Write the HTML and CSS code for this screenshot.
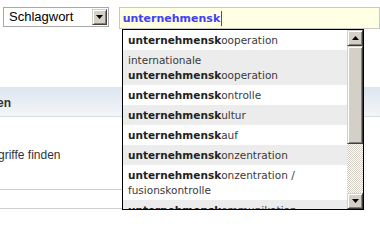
FILE: index.html
```html
<!DOCTYPE html>
<html lang="de">
<head>
<meta charset="utf-8">
<title>Schlagwortsuche</title>
<link rel="stylesheet" href="styles.css">
</head>
<body>
<div class="page">
  <form class="search">
    <div class="select">
      <span class="select-text">Schlagwort</span>
      <span class="btn3d select-btn"><svg width="7" height="4" viewBox="0 0 7 4"><polygon points="0,0 7,0 3.5,4" fill="#000"/></svg></span>
    </div>
    <div class="query"><span class="query-text">unternehmensk</span><span class="caret"></span></div>
  </form>
  <div class="band"><span class="band-title">en</span></div>
  <div class="content"><p class="hint">griffe finden</p></div>
  <div class="rule"></div>
  <div class="gap"></div>
  <div class="rule"></div>
</div>

<div class="suggest">
  <ul class="items">
    <li class="item"><b>unternehmensk</b>ooperation</li>
    <li class="item">internationale<br><b>unternehmensk</b>ooperation</li>
    <li class="item"><b>unternehmensk</b>ontrolle</li>
    <li class="item"><b>unternehmensk</b>ultur</li>
    <li class="item"><b>unternehmensk</b>auf</li>
    <li class="item"><b>unternehmensk</b>onzentration</li>
    <li class="item"><b>unternehmensk</b>onzentration /<br>fusionskontrolle</li>
    <li class="item"><b>unternehmensk</b>ommunikation</li>
  </ul>
  <div class="scrollbar">
    <span class="btn3d sb-btn"><svg width="7" height="4" viewBox="0 0 7 4"><polygon points="0,4 7,4 3.5,0" fill="#000"/></svg></span>
    <span class="btn3d sb-thumb"></span>
    <span class="sb-track"></span>
    <span class="btn3d sb-btn"><svg width="7" height="4" viewBox="0 0 7 4"><polygon points="0,0 7,0 3.5,4" fill="#000"/></svg></span>
  </div>
</div>
</body>
</html>
```
FILE: styles.css
```css
html, body {
  margin: 0;
  padding: 0;
  width: 380px;
  height: 218px;
  overflow: hidden;
  background: #fff;
}

.page {
  font-family: "Liberation Sans", Arial, sans-serif;
  color: #333;
}

.search {
  display: flex;
  align-items: flex-start;
  padding: 7px 0 0 3px;
  margin: 0;
  height: 22px;
}

.select {
  box-sizing: border-box;
  width: 109px;
  height: 20px;
  border: 1px solid #a9a9a9;
  background: #fff;
  display: flex;
  align-items: center;
  justify-content: space-between;
  padding: 0 1px 0 5px;
}

.select-text {
  font-size: 13px;
  color: #000;
  line-height: 16px;
}

.btn3d {
  box-sizing: border-box;
  background: #d4d0c8;
  border: 1px solid;
  border-color: #d4d0c8 #404040 #404040 #d4d0c8;
  box-shadow: inset 1px 1px #fff, inset -1px -1px #808080;
  display: flex;
  align-items: center;
  justify-content: center;
}

.select-btn {
  width: 15px;
  height: 16px;
}

.query {
  box-sizing: border-box;
  margin-left: 10px;
  width: 270px;
  height: 22px;
  border: 1px solid #c8c8c8;
  background: #ffffe4;
  display: flex;
  align-items: center;
  padding-left: 3px;
}

.query-text {
  font-family: "DejaVu Sans", Verdana, sans-serif;
  font-weight: bold;
  font-size: 11px;
  color: #4141f2;
  line-height: 15px;
}

.caret {
  width: 1px;
  height: 15px;
  margin-left: 1px;
  background: #4141f2;
}

.band {
  box-sizing: border-box;
  margin-top: 58px;
  height: 30px;
  background: linear-gradient(#dde6f0, #f3f5f8);
  border-bottom: 1px solid #d6dce4;
  display: flex;
  align-items: center;
  padding-top: 2px;
}

.band-title {
  font-weight: bold;
  font-size: 12px;
  color: #333;
  margin-left: -3px;
}

.content {
  height: 72px;
  display: flex;
  align-items: center;
}

.hint {
  margin: 0 0 0 -2px;
  font-size: 12px;
  line-height: 15px;
  color: #333;
  padding-top: 4px;
}

.rule {
  width: 330px;
  height: 1px;
  background: #cfcfcf;
}

.gap {
  height: 18px;
}

.suggest {
  position: absolute;
  left: 122px;
  top: 29px;
  width: 240px;
  height: 179px;
  border: 1px solid #000;
  background: #fff;
  display: flex;
  overflow: hidden;
}

.items {
  list-style: none;
  margin: 0;
  padding: 0;
  width: 224px;
  overflow: hidden;
}

.item {
  padding: 3px 5px 2px;
  line-height: 15px;
  font-family: "DejaVu Sans", Verdana, sans-serif;
  font-size: 10.5px;
  color: #3a3a3a;
  white-space: nowrap;
}

.item:nth-child(even) {
  background: #ececec;
}

.item b {
  color: #222;
}

.scrollbar {
  width: 16px;
  display: flex;
  flex-direction: column;
}

.sb-btn {
  height: 16px;
  flex: none;
}

.sb-thumb {
  height: 98px;
  flex: none;
}

.sb-track {
  flex: 1;
  background: repeating-conic-gradient(#d4d0c8 0 25%, #fff 0 50%) 0 0 / 2px 2px;
}
```
